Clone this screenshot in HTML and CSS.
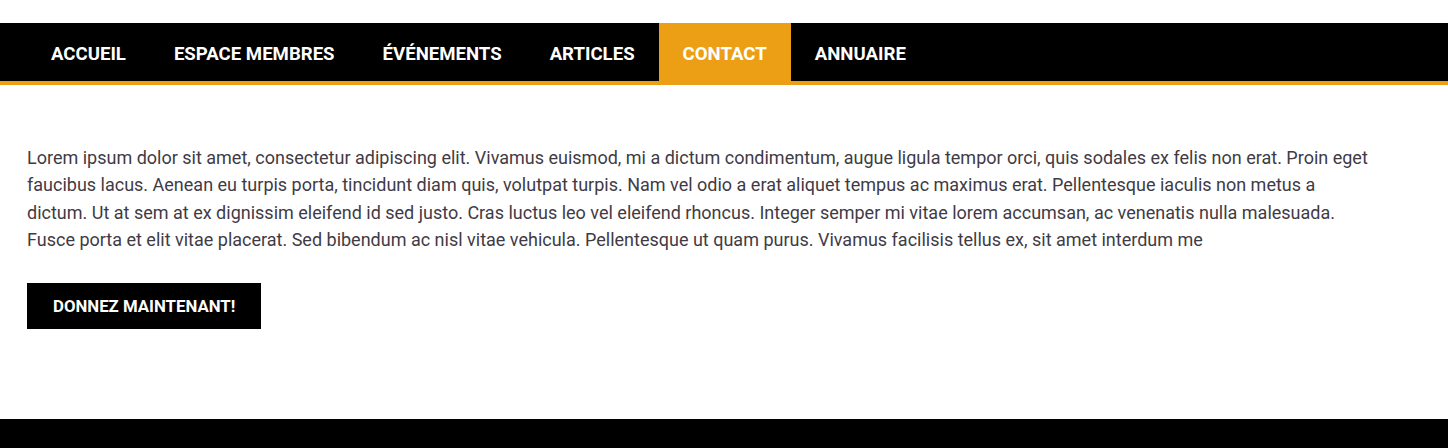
FILE: index.html
```html
<!DOCTYPE html>
<html lang="fr">
<head>
    <meta charset="UTF-8">
    <meta name="viewport" content="width=device-width, initial-scale=1.0">
    <title>Contact</title>
    <link rel="stylesheet" href="styles.css">
</head>
<body>

    <nav class="main-nav">
        <a href="#" class="nav-link">Accueil</a>
        <a href="#" class="nav-link">Espace membres</a>
        <a href="#" class="nav-link">Événements</a>
        <a href="#" class="nav-link">Articles</a>
        <a href="#" class="nav-link active">Contact</a>
        <a href="#" class="nav-link">Annuaire</a>
    </nav>

    <main class="content">
        <p class="intro">Lorem ipsum dolor sit amet, consectetur adipiscing elit. Vivamus euismod, mi a dictum condimentum, augue ligula tempor orci, quis sodales ex felis non erat. Proin eget faucibus lacus. Aenean eu turpis porta, tincidunt diam quis, volutpat turpis. Nam vel odio a erat aliquet tempus ac maximus erat. Pellentesque iaculis non metus a dictum. Ut at sem at ex dignissim eleifend id sed justo. Cras luctus leo vel eleifend rhoncus. Integer semper mi vitae lorem accumsan, ac venenatis nulla malesuada. Fusce porta et elit vitae placerat. Sed bibendum ac nisl vitae vehicula. Pellentesque ut quam purus. Vivamus facilisis tellus ex, sit amet interdum me</p>

        <a href="#" class="donate-button">Donnez maintenant!</a>
    </main>

    <footer class="site-footer"></footer>

</body>
</html>
```

FILE: styles.css
```css
body {
    margin: 0;
    padding-top: 23px;
    font-family: Roboto, "Liberation Sans", sans-serif;
    background-color: #ffffff;
}

/* menu principal */
.main-nav {
    display: flex;
    height: 58px;
    padding-left: 27px;
    background-color: #000000;
    border-bottom: 4px solid #ec9f14;
}

.nav-link {
    display: flex;
    align-items: center;
    padding: 3px 24px 0;
    color: #ffffff;
    text-decoration: none;
    text-transform: uppercase;
    font-weight: bold;
    font-size: 18.6px;
}

.nav-link.active {
    background-color: #ec9f14;
}

.content {
    padding: 59px 27px 90px;
}

.intro {
    max-width: 1344px;
    margin: 0 0 30px;
    font-size: 18px;
    line-height: 27.3px;
    color: #3f3b45;
}

.donate-button {
    display: inline-block;
    padding: 0 26px;
    height: 46px;
    line-height: 46px;
    background-color: #000000;
    color: #ffffff;
    text-decoration: none;
    text-transform: uppercase;
    font-weight: bold;
    font-size: 16.8px;
}

.site-footer {
    height: 40px;
    background-color: #000000;
}
```
